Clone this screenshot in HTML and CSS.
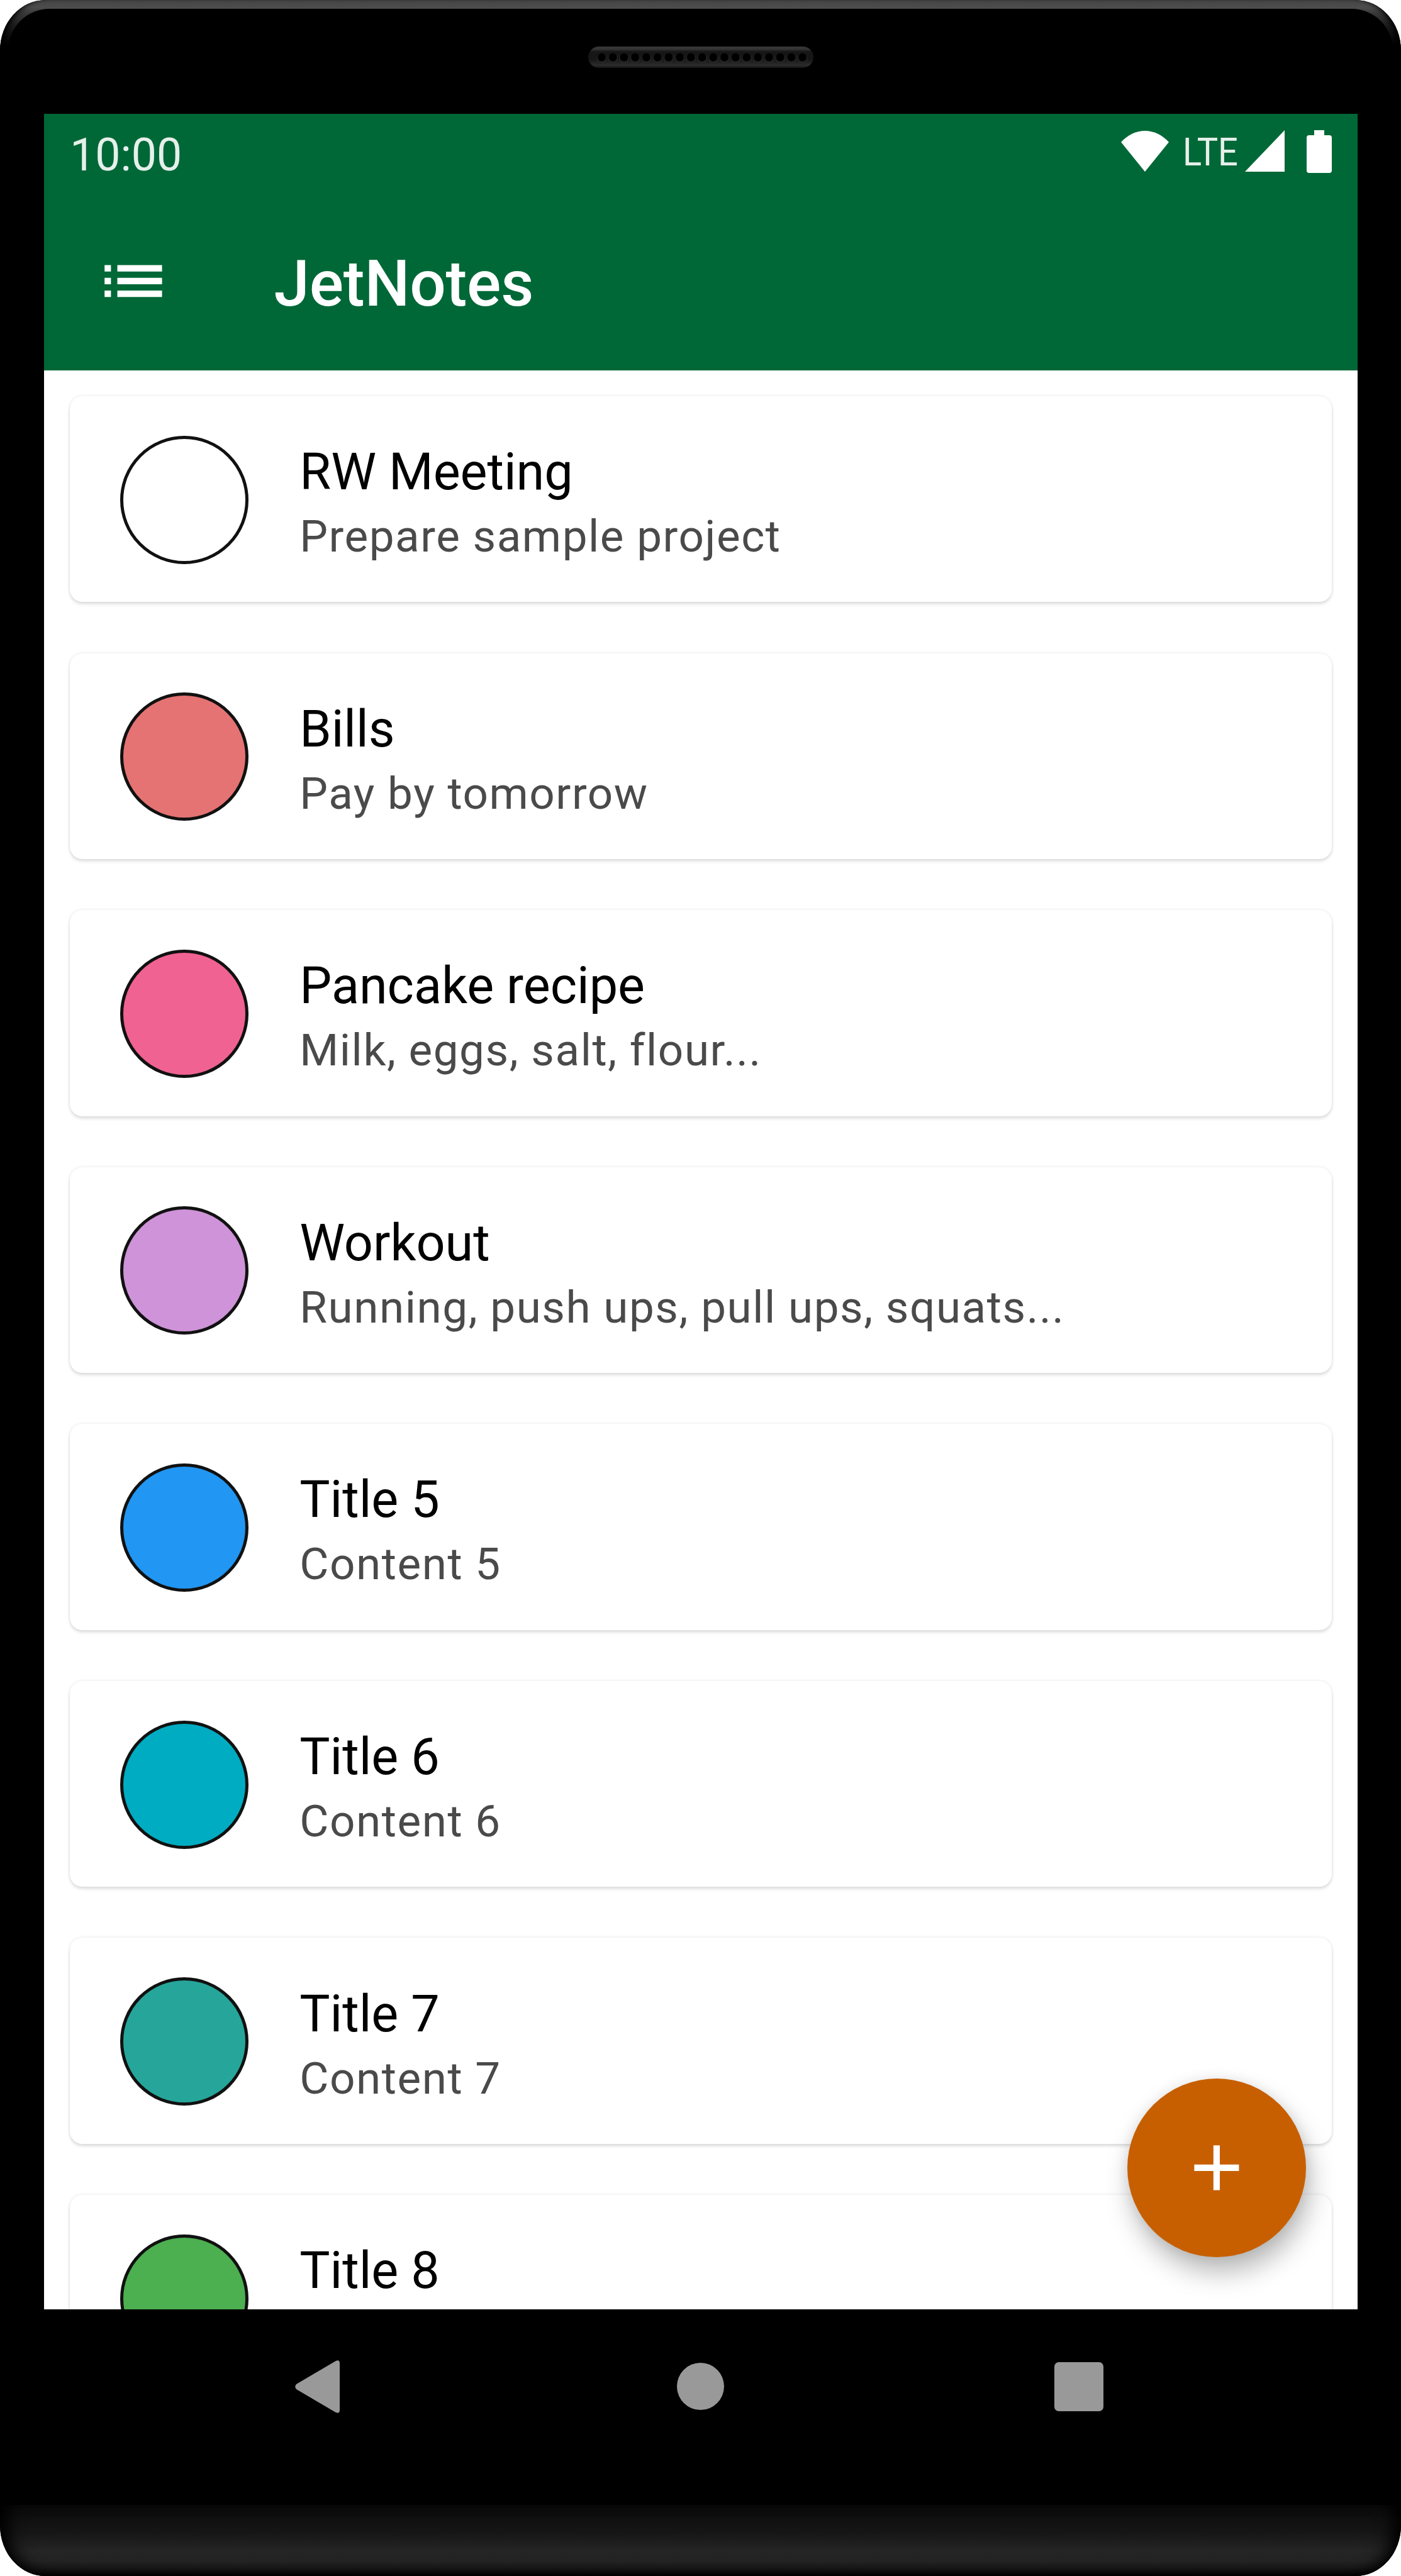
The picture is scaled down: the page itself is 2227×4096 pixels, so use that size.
FILE: index.html
```html
<!DOCTYPE html>
<html lang="en">
<head>
<meta charset="utf-8">
<title>JetNotes</title>
<link rel="stylesheet" href="styles.css">
</head>
<body>
<div class="phone">
  <div class="bezel-top">
    <div class="bezel-face">
      <svg class="speaker" viewBox="0 0 358 34">
        <defs>
          <linearGradient id="rim" x1="0" y1="0" x2="0" y2="1">
            <stop offset="0" stop-color="#383838"/><stop offset=".12" stop-color="#343434"/><stop offset=".24" stop-color="#161616"/><stop offset=".6" stop-color="#161616"/><stop offset=".87" stop-color="#2c2c2c"/><stop offset="1" stop-color="#141414"/>
          </linearGradient>
          <pattern id="holes" x="12.6" y="0" width="17.73" height="34" patternUnits="userSpaceOnUse">
            <circle cx="8.86" cy="18.6" r="8" fill="#242424"/><circle cx="8.86" cy="17" r="6.6" fill="#000"/>
          </pattern>
        </defs>
        <rect width="358" height="34" rx="17" fill="url(#rim)"/>
        <rect x="12.6" y="0" width="336.9" height="34" fill="url(#holes)"/>
      </svg>
    </div>
  </div>
  <main class="screen">
    <header class="header">
      <div class="status">
        <span class="clock">10:00</span>
        <svg class="status-icons" viewBox="0 0 336 70">
          <path fill="#fff" d="M0 19C22-5 54-5 76 19L38 66Z"/>
          <text class="lte" x="98" y="56" textLength="88" lengthAdjust="spacingAndGlyphs">LTE</text>
          <path fill="#fff" d="M197 66L260 0V66Z"/>
          <path fill="#fff" d="M307 0h16v8h8q4 0 4 4v52q0 4-4 4h-32q-4 0-4-4v-52q0-4 4-4h8z"/>
        </svg>
      </div>
      <div class="toolbar">
        <svg class="menu" viewBox="0 0 24 24"><path fill="#fff" d="M3 13h2v-2H3v2zm0 4h2v-2H3v2zm0-8h2V7H3v2zm4 4h14v-2H7v2zm0 4h14v-2H7v2zM7 7v2h14V7H7z"/></svg>
        <h1 class="app-title">JetNotes</h1>
      </div>
    </header>
    <section class="notes">
      <article class="note"><span class="dot white"></span><div class="text"><h2>RW Meeting</h2><p>Prepare sample project</p></div></article>
      <article class="note"><span class="dot red"></span><div class="text"><h2>Bills</h2><p>Pay by tomorrow</p></div></article>
      <article class="note"><span class="dot pink"></span><div class="text"><h2>Pancake recipe</h2><p>Milk, eggs, salt, flour...</p></div></article>
      <article class="note"><span class="dot purple"></span><div class="text"><h2>Workout</h2><p>Running, push ups, pull ups, squats...</p></div></article>
      <article class="note"><span class="dot blue"></span><div class="text"><h2>Title 5</h2><p>Content 5</p></div></article>
      <article class="note"><span class="dot cyan"></span><div class="text"><h2>Title 6</h2><p>Content 6</p></div></article>
      <article class="note"><span class="dot teal"></span><div class="text"><h2>Title 7</h2><p>Content 7</p></div></article>
      <article class="note"><span class="dot green"></span><div class="text"><h2>Title 8</h2></div></article>
    </section>
    <button class="fab" aria-label="Add note"><svg viewBox="0 0 24 24"><path fill="#fff" d="M19 13h-6v6h-2v-6H5v-2h6V5h2v6h6v2z"/></svg></button>
  </main>
  <nav class="nav">
    <svg class="back" viewBox="0 0 72 84"><path fill="#999" d="M2 38L64 1.500Q71-2 71 5V79Q71 86 64 82.500L2 46Q-1.500 42 2 38Z"/></svg>
    <span class="home"></span>
    <span class="recent"></span>
  </nav>
  <div class="chin"></div>
</div>
</body>
</html>
```
FILE: styles.css
```css
* { box-sizing: border-box; margin: 0; padding: 0; }
html, body { width: 2227px; height: 4096px; overflow: hidden; background: #fff; }
body { font-family: Roboto, "Liberation Sans", sans-serif; }

.phone {
  width: 2227px; height: 4096px; overflow: hidden;
  display: flex; flex-direction: column;
  background: #000;
  border-radius: 72px / 80px;
}
.bezel-top {
  flex: none; height: 180.6px;
  padding: 14px 13px 0;
  background: linear-gradient(#464646, #4c4c4c 12px, #383838 22px, #1c1c1c 42px, #000 72px);
  border-radius: 72px 72px 0 0 / 80px 80px 0 0;
  box-shadow: inset 12px 0 10px -6px #000, inset -12px 0 10px -6px #000;
}
.bezel-face {
  height: 100%;
  display: flex; justify-content: center; align-items: flex-start;
  padding-top: 59.5px;
  background: #000;
  border-radius: 66px 66px 0 0 / 66px 66px 0 0;
}
.speaker { width: 358px; height: 34px; }

.screen {
  position: relative; flex: none;
  width: 2087.4px; height: 3491.4px; margin-left: 70.2px;
  overflow: hidden; background: #fff;
}
.header { height: 408.8px; background: #006837; color: #fff; }
.status {
  height: 124.8px; padding: 0 39.5px 0 41px;
  display: flex; justify-content: space-between; align-items: flex-start;
}
.clock { font-size: 71.5px; line-height: 84px; margin-top: 24px; color: #e6f0eb; }
.status-icons { width: 336px; height: 70px; margin-top: 26.500px; overflow: visible; }
.lte { font-size: 62px; fill: #e6f0eb; }
.toolbar { height: 284px; display: flex; align-items: center; padding-left: 81.2px; }
.menu { width: 121.8px; height: 121.8px; }
.app-title { margin-left: 162.4px; padding-top: 9px; font-size: 101.5px; font-weight: 500; line-height: 120px; letter-spacing: -.25px; }

.notes { display: flex; flex-direction: column; gap: 81.2px; padding: 40.6px 40.6px 0; }
.note {
  flex: none; height: 327.4px; padding-left: 80.5px;
  display: flex; align-items: center; gap: 81px;
  border-radius: 20px; background: #fff;
  box-shadow: 0 0 5px rgba(0,0,0,.1), 0 4px 5px rgba(0,0,0,.1);
}
.dot { width: 204px; height: 204px; margin-top: 2px; border-radius: 50%; border: 5px solid #111; }
.white { background: #fff; }
.red { background: #e57373; }
.pink { background: #f06292; }
.purple { background: #ce93d8; }
.blue { background: #2196f3; }
.cyan { background: #00acc1; }
.teal { background: #26a69a; }
.green { background: #4caf50; }
.text { height: 203px; padding-top: 5px; white-space: nowrap; }
.text h2 { font-size: 81px; font-weight: 400; line-height: 108px; letter-spacing: -.05px; color: #000; }
.text p { font-size: 71px; line-height: 96px; letter-spacing: 1.53px; color: #4a4a4a; }

.fab {
  position: absolute; right: 82px; bottom: 83px;
  width: 284px; height: 284px; border: 0; border-radius: 50%;
  display: flex; align-items: center; justify-content: center;
  background: #c75f00;
  box-shadow: 6px 24px 42px rgba(0,0,0,.28), 0 0 20px rgba(0,0,0,.08);
}
.fab svg { width: 121.8px; height: 121.8px; }

.nav {
  flex: none; height: 310.6px; padding: 0 473.5px 65px 469px;
  display: flex; justify-content: space-between; align-items: center;
}
.back { width: 72px; height: 84px; }
.home { width: 75px; height: 75px; margin-left: 10px; border-radius: 50%; background: #999; }
.recent { width: 78px; height: 78px; border-radius: 7px; background: #999; }
.chin {
  flex: 1;
  background: linear-gradient(#0a0a0a, #161616 40%, #252525 65%, #232323 78%, #1a1a1a 88%, #050505 98%, #000);
  border-radius: 0 0 72px 72px / 0 0 80px 80px;
  box-shadow: inset 26px 0 26px -12px #000, inset -26px 0 26px -12px #000;
}
```
